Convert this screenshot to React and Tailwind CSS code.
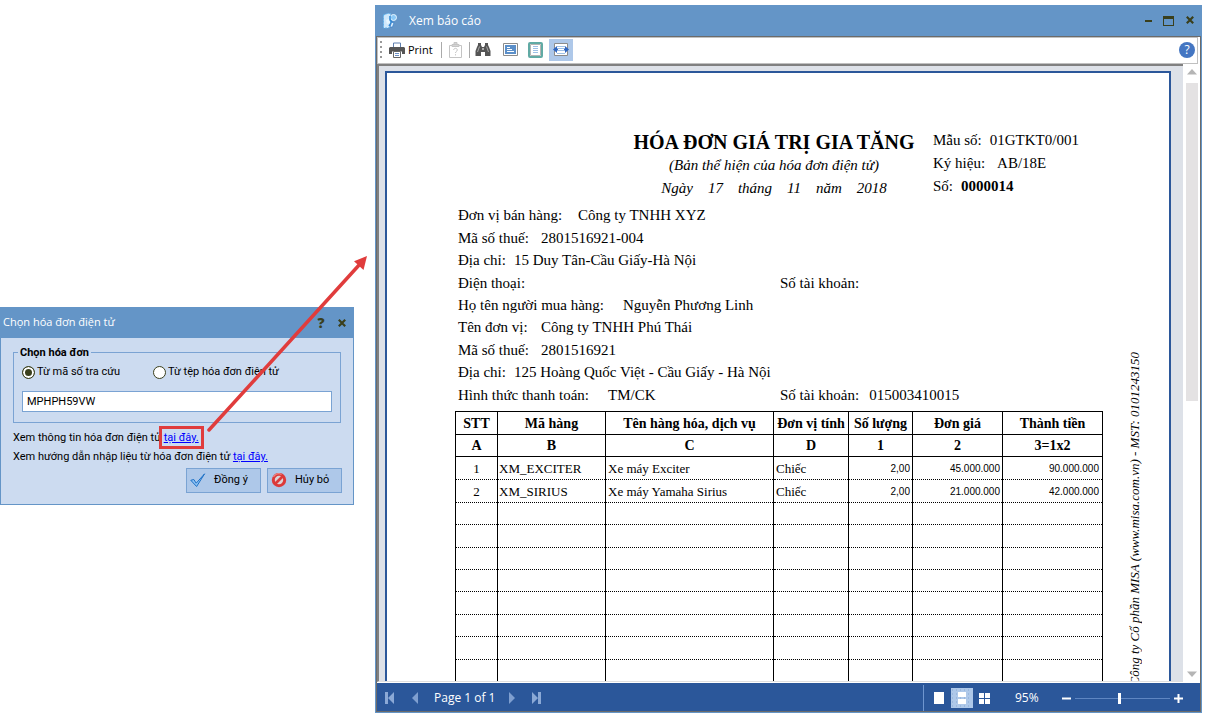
const columns = [
  { title: "STT", code: "A", width: "w-[42px]" },
  { title: "Mã hàng", code: "B", width: "w-[108px]" },
  { title: "Tên hàng hóa, dịch vụ", code: "C", width: "w-[168px]" },
  { title: "Đơn vị tính", code: "D", width: "w-[75px]" },
  { title: "Số lượng", code: "1", width: "w-[64px]" },
  { title: "Đơn giá", code: "2", width: "w-[90px]" },
  { title: "Thành tiền", code: "3=1x2", width: "w-[100px]" },
];

const items = [
  ["1", "XM_EXCITER", "Xe máy Exciter", "Chiếc", "2,00", "45.000.000", "90.000.000"],
  ["2", "XM_SIRIUS", "Xe máy Yamaha Sirius", "Chiếc", "2,00", "21.000.000", "42.000.000"],
];

const blankRows = ["h-[22px]", "h-[23px]", "h-[22px]", "h-[22px]", "h-[23px]", "h-[22px]", "h-[23px]", "h-[22px]", "h-[23px]"];

const cellStyles = [
  "text-center text-[13px]",
  "pl-px text-[13px]",
  "pl-[2px] text-[13px]",
  "pl-[2px] text-[13px]",
  "pr-[2px] text-right font-['Liberation_Sans'] text-[10px]",
  "pr-[2px] text-right font-['Liberation_Sans'] text-[10px]",
  "pr-[3px] text-right font-['Liberation_Sans'] text-[10px]",
];

const fields = [
  { label: "Đơn vị bán hàng:", value: "Công ty TNHH XYZ", width: "w-[120px]" },
  { label: "Mã số thuế:", value: "2801516921-004", width: "w-[83px]" },
  { label: "Địa chỉ:", value: "15 Duy Tân-Cầu Giấy-Hà Nội", width: "w-[56px]" },
  { label: "Điện thoại:", value: "", width: "w-[83px]", account: "" },
  { label: "Họ tên người mua hàng:", value: "Nguyễn Phương Linh", width: "w-[165px]" },
  { label: "Tên đơn vị:", value: "Công ty TNHH Phú Thái", width: "w-[83px]" },
  { label: "Mã số thuế:", value: "2801516921", width: "w-[83px]" },
  { label: "Địa chỉ:", value: "125 Hoàng Quốc Việt - Cầu Giấy - Hà Nội", width: "w-[56px]" },
  { label: "Hình thức thanh toán:", value: "TM/CK", width: "w-[150px]", account: "015003410015" },
];

function CloseGlyph() {
  return (
    <svg width="8" height="8" viewBox="0 0 8 8" stroke="#3a3f1c" strokeWidth="2.2">
      <path d="M.8.8l6.4 6.4M7.2.8L.8 7.2" />
    </svg>
  );
}

function LookupDialog() {
  return (
    <section className="mt-[307px] w-[354px] shrink-0 border border-t-0 border-[#6495c7] bg-[#ccdbf0] font-[Roboto,sans-serif] text-[11px] text-black">
      <header className="flex h-[31px] items-center bg-[#6495c7] pr-px pl-0.5">
        <h2 className="flex-1 font-['Open_Sans',sans-serif] text-[11px] text-white">Chọn hóa đơn điện tử</h2>
        <button aria-label="Trợ giúp" className="w-[22px] font-['Open_Sans',sans-serif] text-[14px] leading-none font-extrabold text-[#3a3f1c]">?</button>
        <button aria-label="Đóng" className="flex w-[20px] justify-center">
          <CloseGlyph />
        </button>
      </header>
      <div className="px-3 pt-[7px] pb-[11px]">
        <fieldset className="border border-[#7aa3d3] px-2 pb-[10px]">
          <legend className="-ml-1 px-0.5 font-bold leading-[15px]">Chọn hóa đơn</legend>
          <div className="flex h-[25px] items-center">
            <label className="flex w-[131px] items-center gap-[2px]">
              <input type="radio" name="source" defaultChecked className="size-[13px] appearance-none rounded-full border border-[#3a3f1c] bg-[#3a3f1c] shadow-[inset_0_0_0_2px_white]" />
              Từ mã số tra cứu
            </label>
            <label className="flex items-center gap-[2px]">
              <input type="radio" name="source" className="size-[13px] appearance-none rounded-full border border-[#3a3f1c] bg-white checked:bg-[#3a3f1c] checked:shadow-[inset_0_0_0_2px_white]" />
              Từ tệp hóa đơn điện tử
            </label>
          </div>
          <input aria-label="Mã số tra cứu" defaultValue="MPHPH59VW" className="mt-[6px] block h-[21px] w-full border border-[#7aa3d3] bg-white px-1" />
        </fieldset>
        <div className="mt-[5px] leading-[19px]">
          <p>
            Xem thông tin hóa đơn điện tử{" "}
            <span className="relative">
              <a href="#lookup" className="text-[#0000ff] underline">tại đây.</a>
              <span className="pointer-events-none absolute -inset-x-[5px] -inset-y-[5px] border-[3px] border-[#e03c3c]" />
            </span>
          </p>
          <p>
            Xem hướng dẫn nhập liệu từ hóa đơn điện tử{" "}
            <a href="#guide" className="text-[#0000ff] underline">tại đây.</a>
          </p>
        </div>
        <div className="mt-[2px] -mr-px flex justify-end gap-[6px]">
          <button className="flex h-[25px] w-[75px] items-center gap-2 border border-[#7aa3d3] bg-[#aec8e9] pl-[3px]">
            <svg width="16" height="16" viewBox="0 0 16 16">
              <path d="M.8 7.300l3-.8 2.400 3.700L14.600 .800 6.600 13.500z" fill="#8fc4f5" stroke="#1c6fc4" strokeWidth="1" strokeLinejoin="round" />
            </svg>
            Đồng ý
          </button>
          <button className="flex h-[25px] w-[75px] items-center gap-2 border border-[#7aa3d3] bg-[#aec8e9] pl-[3px]">
            <svg width="16" height="16" viewBox="0 0 16 16">
              <circle cx="8" cy="7" r="5.700" fill="#ddd3d6" stroke="#dc3a3a" strokeWidth="3" />
              <path d="M4 11l8-8" stroke="#dc3a3a" strokeWidth="2.600" />
              <path d="M2.500 4a6.500 6.500 0 0 1 8-2.700" fill="none" stroke="#f39a97" />
            </svg>
            Hủy bỏ
          </button>
        </div>
      </div>
    </section>
  );
}

function Toolbar() {
  return (
    <div className="mr-[2px] flex h-[27px] items-center border border-[#c0c0c0] bg-white pr-[2px] pb-px pl-[2px] font-['Open_Sans',sans-serif] text-[11px] text-black">
      <svg width="2" height="18" viewBox="0 0 2 18" fill="#999">
        <path d="M0 0h2v2H0zM0 5h2v2H0zM0 10h2v2H0zM0 15h2v2H0z" />
      </svg>
      <button className="ml-[7px] flex items-center gap-[3px]">
        <svg width="16" height="16" viewBox="0 0 16 16">
          <path d="M4.500 5V1h7v4" fill="#fff" stroke="#5f7fae" />
          <path d="M1 5h14l1 1v6h-3V9.500H3V12H0V6z" fill="#555" />
          <path d="M4.500 9.500h7v6h-7z" fill="#fff" stroke="#666" />
          <path d="M6 11.500h4M6 13.500h4" stroke="#6a8fc5" />
        </svg>
        Print
      </button>
      <span className="ml-[8px] h-4 w-px bg-[#aaa]" />
      <button aria-label="Tham số" className="ml-[7px]">
        <svg width="13" height="16" viewBox="0 0 13 16" fill="none" stroke="#c4c4c4">
          <path d="M.5 3.500h12v12H.5z" />
          <path d="M3 2.500h7v2H3zM5 .5h3v2H5z" fill="#d4d4d4" />
          <path d="M4.700 8c0-2.200 3.600-2.200 3.600 0 0 1.500-1.800 1.300-1.800 3M6.500 12.200v1.200" />
        </svg>
      </button>
      <span className="ml-[7px] h-4 w-px bg-[#aaa]" />
      <button aria-label="Tìm kiếm" className="ml-[5px]">
        <svg width="16" height="14" viewBox="0 0 16 14" fill="#555">
          <path d="M3 0h3v2l1 2h2l1-2V0h3v2l1 2 1.500 4v5H10V9H6v4H.500V8L2 4l1-2z" />
          <path d="M7.500 5h1v2h-1z" fill="#fff" />
          <path d="M4.500 3.500L2.500 9M11.500 3.500l2 5.500" stroke="#bbb" strokeWidth=".8" />
        </svg>
      </button>
      <button aria-label="Cỡ thật" className="ml-3">
        <svg width="16" height="14" viewBox="0 0 16 14">
          <path d="M.5 .5h14v12H.5z" fill="#fff" stroke="#8b8b8b" />
          <path d="M2 2h11v9H2z" fill="#5b8fc9" />
          <path d="M4 4.500h3M4 6.500h5M4 8.500h7" stroke="#fff" />
        </svg>
      </button>
      <button aria-label="Cả trang" className="ml-[9px]">
        <svg width="15" height="16" viewBox="0 0 15 16">
          <rect x="1" y="1" width="13" height="14" rx="1" fill="#fff" stroke="#60aaa4" strokeWidth="2" />
          <path d="M2.500 2.500h10v11h-10z" fill="#fff" stroke="#b4b4b4" />
          <path d="M5 4.500h5M5 6.500h5M5 8.500h5M5 10.500h5" stroke="#9ec0e6" />
        </svg>
      </button>
      <button aria-label="Vừa chiều rộng" className="ml-[6px] flex h-[22px] w-6 items-center justify-center bg-[#aec8e9]">
        <svg width="16" height="14" viewBox="0 0 16 14">
          <path d="M1.500 .5v12h13V.5z" fill="#fff" stroke="#8b8b8b" />
          <path d="M4 3.500h8M5 5.500h6M5 7.500h6M4 10.500h8" stroke="#9ec0e6" />
          <path d="M0 6.500L4 3v2.500h1v2H4V10zM16 6.500L12 3v2.500h-1v2h1V10z" fill="#2f66c0" />
        </svg>
      </button>
      <button aria-label="Trợ giúp" className="ml-auto flex size-4 items-center justify-center rounded-full bg-[#4476c2] font-['Open_Sans',sans-serif] text-[12px] leading-none text-white">?</button>
    </div>
  );
}

function Invoice() {
  return (
    <article className="flex h-[960px] border-2 border-[#2b579a] bg-white pt-[58px] pl-[68px] font-['Liberation_Serif',serif] text-[15px] text-black">
      <div className="w-[648px] shrink-0">
        <div className="flex h-[73px] pl-[179px]">
          <div className="flex w-[280px] flex-col items-center">
            <h1 className="text-[20px] leading-[23px] font-bold whitespace-nowrap">HÓA ĐƠN GIÁ TRỊ GIA TĂNG</h1>
            <p className="leading-[23px] whitespace-nowrap italic">(Bản thể hiện của hóa đơn điện tử)</p>
            <p className="flex gap-[15px] leading-[23px] italic">
              <span>Ngày</span>
              <span>17</span>
              <span>tháng</span>
              <span>11</span>
              <span>năm</span>
              <span>2018</span>
            </p>
          </div>
          <dl className="-mt-0.5 ml-[19px] leading-[23px] whitespace-nowrap">
            <div className="flex gap-2"><dt>Mẫu số:</dt><dd>01GTKT0/001</dd></div>
            <div className="flex gap-3"><dt>Ký hiệu:</dt><dd>AB/18E</dd></div>
            <div className="flex gap-2"><dt>Số:</dt><dd className="font-bold">0000014</dd></div>
          </dl>
        </div>
        <dl className="grid h-[202px] auto-rows-fr pl-[3px]">
          {fields.map((field, i) => (
            <div key={i} className="grid grid-cols-[322px_1fr] items-center leading-[22px] whitespace-nowrap">
              <div className="flex">
                <dt className={field.width}>{field.label}</dt>
                <dd>{field.value}</dd>
              </div>
              {field.account !== undefined && (
                <div className="flex gap-[10px]">
                  <dt>Số tài khoản:</dt>
                  <dd>{field.account}</dd>
                </div>
              )}
            </div>
          ))}
        </dl>
        <table className="mt-[5px] w-full table-fixed border-collapse border border-black">
          <colgroup>
            {columns.map((c) => <col key={c.title} className={c.width} />)}
          </colgroup>
          <thead className="text-[14px] leading-[20px]">
            <tr className="h-[23px]">
              {columns.map((c) => (
                <th key={c.title} className="border border-black p-0 pt-[2px] whitespace-nowrap">{c.title}</th>
              ))}
            </tr>
            <tr className="h-[22px]">
              {columns.map((c) => <th key={c.code} className="border border-black p-0 pt-px">{c.code}</th>)}
            </tr>
          </thead>
          <tbody className="leading-[20px]">
            {items.map((row) => (
              <tr key={row[0]} className="h-[23px]">
                {row.map((cell, i) => (
                  <td key={i} className="border-x border-b border-black p-0 pt-[2px] [border-bottom-style:dotted]">
                    <div className={cellStyles[i]}>{cell}</div>
                  </td>
                ))}
              </tr>
            ))}
            {blankRows.map((height, r) => (
              <tr key={r} className={height}>
                {columns.map((c) => (
                  <td key={c.code} className="border-x border-b border-black p-0 [border-bottom-style:dotted]" />
                ))}
              </tr>
            ))}
          </tbody>
        </table>
      </div>
      <div className="pt-[221px] pl-[23px]">
        <p className="rotate-180 text-[13px] leading-[18px] whitespace-nowrap italic [writing-mode:vertical-rl]">
          Công ty Cổ phần MISA (www.misa.com.vn) - MST: 0101243150
        </p>
      </div>
    </article>
  );
}

function ScrollBar() {
  return (
    <div className="flex w-[17px] shrink-0 flex-col items-center bg-white">
      <svg className="mt-[5px] shrink-0" width="10" height="6" viewBox="0 0 10 6" fill="#b5b5b5"><path d="M0 5.500L5 0l5 5.500z" /></svg>
      <div className="mt-[8px] h-[318px] w-3 shrink-0 bg-[#e4e2e3]" />
      <svg className="mt-auto mb-[5px] shrink-0" width="10" height="6" viewBox="0 0 10 6" fill="#b5b5b5"><path d="M0 .5L5 6 10 .5z" /></svg>
    </div>
  );
}

function StatusBar() {
  return (
    <footer className="flex h-[28px] shrink-0 items-center bg-[#2b579a] pt-[2px] pl-2 font-['Open_Sans',sans-serif] text-[12px] text-white">
      <button aria-label="Trang đầu"><svg width="9" height="12" viewBox="0 0 9 12" fill="#8ba9d6"><path d="M0 0h3v12H0zM9 0v12L3 6z" /></svg></button>
      <button aria-label="Trang trước" className="ml-[18px]"><svg width="6" height="12" viewBox="0 0 6 12" fill="#7f9fd0"><path d="M6 0v12L0 6z" /></svg></button>
      <span className="mr-[14px] ml-4 whitespace-nowrap">Page 1 of 1</span>
      <button aria-label="Trang sau"><svg width="6" height="12" viewBox="0 0 6 12" fill="#7f9fd0"><path d="M0 0v12l6-6z" /></svg></button>
      <button aria-label="Trang cuối" className="ml-[17px]"><svg width="9" height="12" viewBox="0 0 9 12" fill="#8ba9d6"><path d="M6 0h3v12H6zM0 0v12l6-6z" /></svg></button>
      <span className="ml-auto h-[26px] w-px bg-[#6f96cf]" />
      <button aria-label="Một trang" className="ml-[10px]"><svg width="10" height="12" viewBox="0 0 10 12"><path d="M0 0h10v12H0z" fill="#fff" /></svg></button>
      <button aria-label="Cuộn liên tục" className="ml-[7px] flex h-5 w-[22px] items-center justify-center bg-[#aec8e9]">
        <svg width="22" height="20" viewBox="0 0 22 20">
          <path d="M1 2h20M1 6h20M1 10h20M1 14h20M1 18h20" stroke="#86a6d2" strokeDasharray="1 3" />
          <path d="M7 4h8v5H7zM7 11h8v5H7z" fill="#fff" />
        </svg>
      </button>
      <button aria-label="Nhiều trang" className="ml-[6px]"><svg width="11" height="11" viewBox="0 0 11 11"><path d="M0 0h5v5H0zM6 0h5v5H6zM0 6h5v5H0zM6 6h5v5H6z" fill="#fff" /></svg></button>
      <span className="ml-[25px] w-[23px]">95%</span>
      <button aria-label="Thu nhỏ" className="ml-[24px]"><svg width="9" height="9" viewBox="0 0 9 9"><path d="M0 3.500h9v2H0z" fill="#fff" /></svg></button>
      <input
        type="range"
        aria-label="Thu phóng"
        min="0"
        max="100"
        defaultValue="47"
        className="mx-1 h-[14px] w-[95px] appearance-none bg-[linear-gradient(#5f86c2,#5f86c2)] bg-[length:100%_1px] bg-center bg-no-repeat [&::-webkit-slider-thumb]:h-[11px] [&::-webkit-slider-thumb]:w-[3px] [&::-webkit-slider-thumb]:appearance-none [&::-webkit-slider-thumb]:bg-white"
      />
      <button aria-label="Phóng to" className="mr-[17px]"><svg width="9" height="9" viewBox="0 0 9 9"><path d="M0 3.500h9v2H0zM3.500 0h2v9h-2z" fill="#fff" /></svg></button>
    </footer>
  );
}

function ReportWindow() {
  return (
    <section className="mt-[5px] mb-[7px] ml-[21px] flex min-w-0 flex-1 flex-col bg-[#6495c7] px-px pb-px">
      <header className="flex h-[31px] shrink-0 items-center pl-[7px] text-white">
        <svg width="14" height="16" viewBox="0 0 14 16">
          <path d="M.5 2l4-1.500h3V13l-2 2h-5z" fill="#cfe8fb" stroke="#5fb0ea" strokeDasharray="2 1" />
          <path d="M3 7l3-1 1 4-3 1z" fill="#e8f6ff" />
          <circle cx="10.500" cy="4.500" r="3" fill="#8ccaf7" stroke="#e6f5ff" />
          <path d="M7 3v4l2 2-3 4" fill="none" stroke="#2f86d4" strokeWidth="1.500" />
          <path d="M8.500 9.500H11L9.500 14H7z" fill="#dff1fd" stroke="#3b7fc8" strokeWidth=".7" />
        </svg>
        <h1 className="ml-3 flex-1 font-['Open_Sans',sans-serif] text-[12px]">Xem báo cáo</h1>
        <button aria-label="Thu nhỏ" className="mr-[11px]"><svg width="7" height="10" viewBox="0 0 7 10"><path d="M0 4h7v2H0z" fill="#3a3f1c" /></svg></button>
        <button aria-label="Phóng to" className="mr-[12px]"><svg width="11" height="10" viewBox="0 0 11 10"><path d="M0 0h11v10H0zM1 3v6h9V3z" fill="#3a3f1c" fillRule="evenodd" /></svg></button>
        <button aria-label="Đóng" className="mr-[7px] pb-0.5"><CloseGlyph /></button>
      </header>
      <div className="flex min-h-0 flex-1 flex-col border border-[#6b6b6b] bg-white">
        <Toolbar />
        <div className="flex min-h-0 flex-1">
          <div className="min-w-0 flex-1 overflow-hidden border-t-2 border-b border-l-2 border-t-[#808080] border-b-[#e0e0e0] border-l-[#808080] bg-[#dde1e8] pt-[5px] pr-3 pl-[6px]">
            <Invoice />
          </div>
          <ScrollBar />
        </div>
        <div className="h-px shrink-0 bg-white" />
        <StatusBar />
      </div>
    </section>
  );
}

export default function App() {
  return (
    <main className="relative flex h-screen items-stretch bg-white pr-[3px]">
      <div className="shrink-0">
        <LookupDialog />
      </div>
      <ReportWindow />
      <svg className="pointer-events-none absolute top-0 left-0" width="375" height="440" viewBox="0 0 375 440" aria-hidden="true">
        <path d="M209 430L360 264" stroke="#e03c3c" strokeWidth="3.500" strokeLinecap="round" />
        <path d="M367 256l-3.500 14-9.500-8.700z" fill="#e03c3c" />
      </svg>
    </main>
  );
}
